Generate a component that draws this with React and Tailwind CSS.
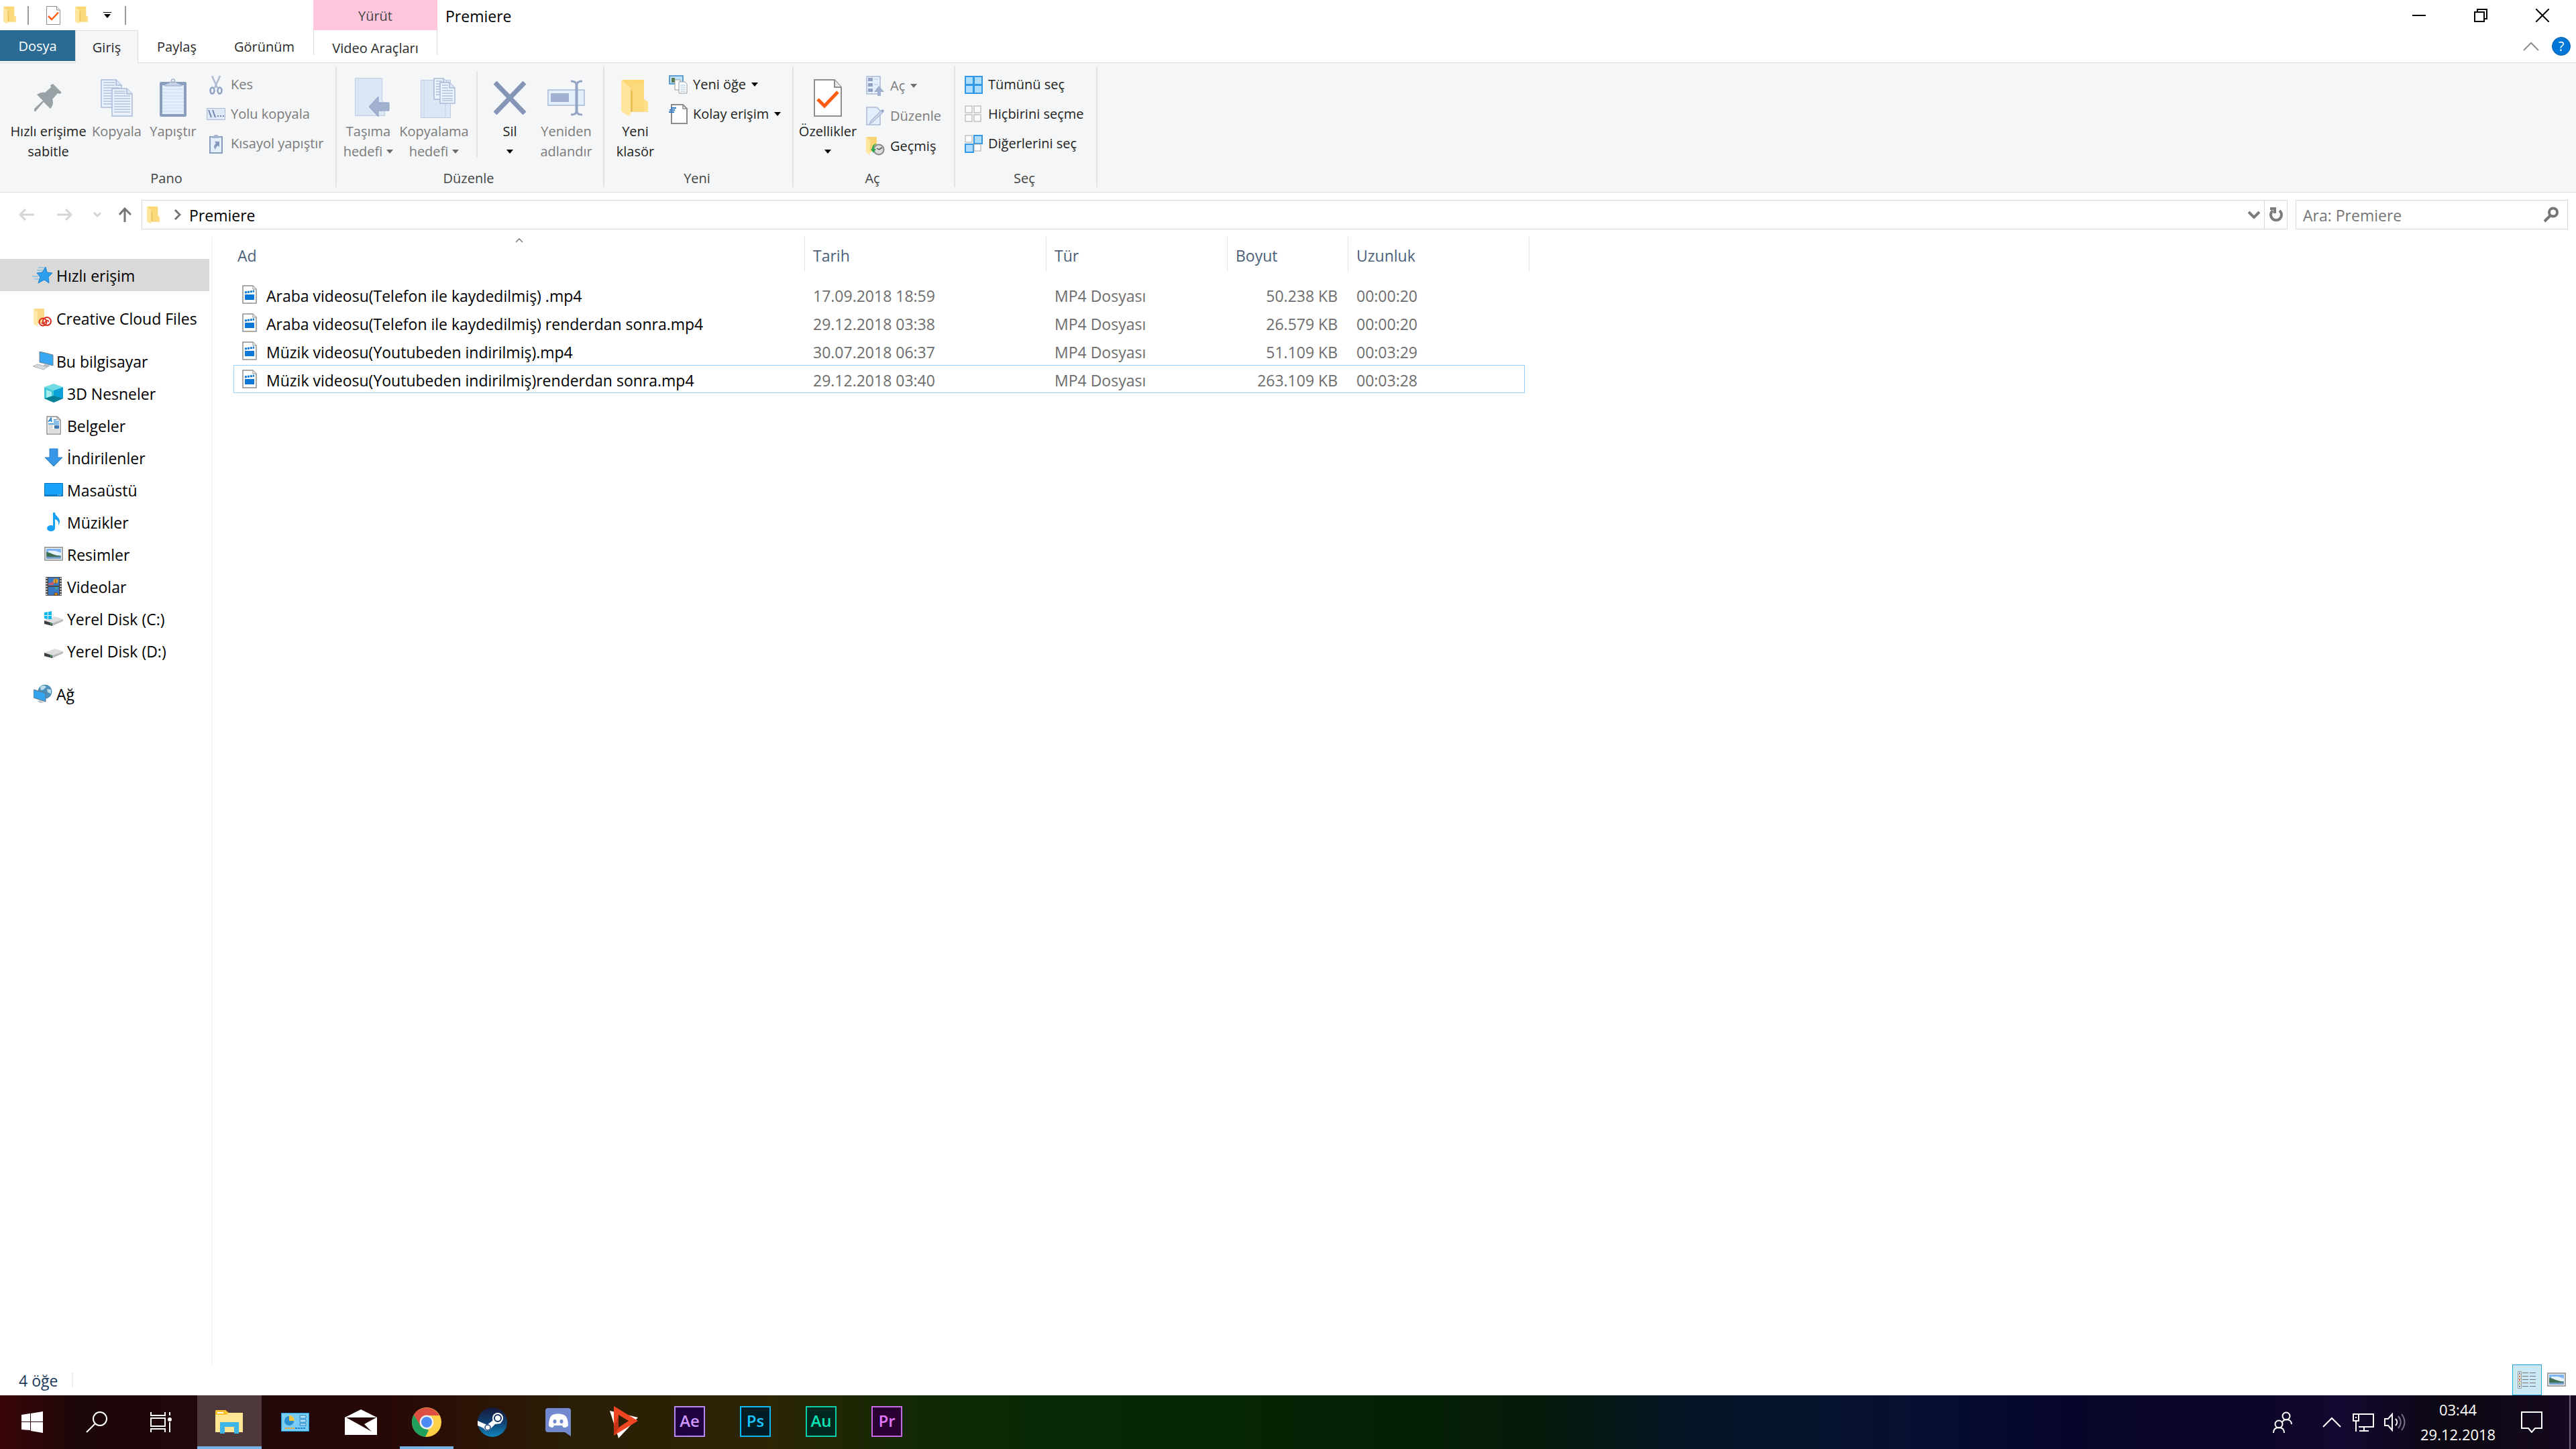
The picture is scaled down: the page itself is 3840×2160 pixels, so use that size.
import { useState } from "react";

const files = [
  { name: "Araba videosu(Telefon ile kaydedilmiş) .mp4", date: "17.09.2018 18:59", size: "50.238 KB", length: "00:00:20" },
  { name: "Araba videosu(Telefon ile kaydedilmiş) renderdan sonra.mp4", date: "29.12.2018 03:38", size: "26.579 KB", length: "00:00:20" },
  { name: "Müzik videosu(Youtubeden indirilmiş).mp4", date: "30.07.2018 06:37", size: "51.109 KB", length: "00:03:29" },
  { name: "Müzik videosu(Youtubeden indirilmiş)renderdan sonra.mp4", date: "29.12.2018 03:40", size: "263.109 KB", length: "00:03:28" },
];

/* ---------- shared icons ---------- */

function Folder({ className }) {
  return (
    <svg className={className} viewBox="0 0 42 54">
      <path d="M2 0h32v29l6 4v15H14z" fill="#fbd672" />
      <path d="M14 6h20v42H14z" fill="#fada7c" />
      <path d="M34 29l6 4v15h-6z" fill="#ffe08a" />
      <path d="M0 0l14 12v40l-3 2L0 47z" fill="#ffe69c" />
      <path d="M14 14v34l3-1V17z" fill="#e9be57" />
    </svg>
  );
}

function CheckDoc({ className }) {
  return (
    <svg className={className} viewBox="0 0 42 56">
      <path d="M1 1h30l10 11v43H1z" fill="#fff" stroke="#8f8f8f" strokeWidth="2" />
      <path d="M31 1v11h10" fill="#e9e9e9" stroke="#8f8f8f" strokeWidth="2" />
      <path d="M6 30l10 10 20-21" fill="none" stroke="#fb5d13" strokeWidth="5" />
    </svg>
  );
}

function Caret({ className }) {
  return (
    <svg className={className} width="10" height="6" viewBox="0 0 10 6">
      <path d="M0 0h10L5 6z" fill="currentColor" />
    </svg>
  );
}

function Picture() {
  return (
    <svg width="28" height="22" viewBox="0 0 28 22">
      <path d="M1 1h26v19H1z" fill="#fff" stroke="#a2a2a2" strokeWidth="2" />
      <path d="M3 3h22v15H3z" fill="#7db4f5" />
      <path d="M6 6h10l9 3v4H6z" fill="#e6f2fb" />
      <path d="M3 8c6 0 8 4 22 6v1H3z" fill="#3f6f55" />
      <path d="M3 15h22v3H3z" fill="#6f9cc8" />
    </svg>
  );
}

/* ---------- ribbon icons ---------- */

function Pin() {
  return (
    <svg width="42" height="42" viewBox="0 0 42 42" fill="#97a1a6">
      <path d="M28 0l13 13-3 2-3-1-8 9c2 5 1 9-3 14L14 27 2 41H0v-4l13-12L4 16c4-3 8-4 12-3l9-8-1-3z" />
    </svg>
  );
}

function Sheet({ x, y, w, h, lines }) {
  return (
    <g transform={`translate(${x} ${y})`}>
      <path d={`M1 1h${w - 10}l8 8v${h - 9}H1z`} fill="#e9f2fd" stroke="#a9b9d6" strokeWidth="1.5" />
      <path d={`M${w - 9} 1v8h8`} fill="#dbe7f7" stroke="#a9b9d6" strokeWidth="1.5" />
      {lines.map((ly) => (
        <path key={ly} d={`M4 ${ly}h${ly < 10 ? w - 15 : w - 8}`} stroke="#a9b9d6" strokeWidth="1.3" />
      ))}
    </g>
  );
}

function CopyIcon() {
  return (
    <svg width="48" height="56" viewBox="0 0 48 56">
      <Sheet x={0} y={0} w={32} h={42} lines={[5, 9, 13, 17, 21, 25, 29, 33, 37]} />
      <Sheet x={16} y={13} w={32} h={42} lines={[5, 8, 12, 16, 20, 24, 28, 32, 36]} />
    </svg>
  );
}

function PasteIcon() {
  return (
    <svg width="40" height="58" viewBox="0 0 40 58">
      <rect y="5" width="40" height="52" rx="2" fill="#8a9dbd" />
      <path d="M4 10h32v43H4z" fill="#e4effc" />
      <path d="M4 16h32M4 21h32M4 26h32M4 30h32M4 35h32M4 40h32M4 44h32M4 49h32" stroke="#c9d8ee" />
      <path d="M7 11c1-4 6-2 9-6h8c3 4 8 2 9 6z" fill="#c6d2e6" stroke="#93a6c6" />
      <circle cx="20" cy="3.500" r="2.500" fill="none" stroke="#a4b5d1" strokeWidth="1.500" />
    </svg>
  );
}

function CutIcon() {
  return (
    <svg width="20" height="29" viewBox="0 0 20 29" fill="none">
      <path d="M4 1l8 18M16 1L8 19" stroke="#aebcd2" strokeWidth="2.500" />
      <ellipse cx="4.500" cy="23" rx="3" ry="4.500" stroke="#8fa2c6" strokeWidth="2.500" />
      <ellipse cx="15.500" cy="23" rx="3" ry="4.500" stroke="#8fa2c6" strokeWidth="2.500" />
    </svg>
  );
}

function PathIcon() {
  return (
    <svg width="28" height="18" viewBox="0 0 28 18">
      <path d="M.5.5h27v17H.5z" fill="#dfe9f6" stroke="#a9b9d6" />
      <path d="M3 3l4 11M9 3l4 11" stroke="#7186b0" strokeWidth="2" />
      <path d="M16 12h2M20 12h2M24 12h2" stroke="#7186b0" strokeWidth="2" />
    </svg>
  );
}

function ShortcutIcon() {
  return (
    <svg width="20" height="29" viewBox="0 0 20 29">
      <path d="M1 4h18v24H1z" fill="#e4effc" stroke="#8a9dbd" strokeWidth="2" />
      <path d="M5 4l3-3h4l3 3v2H5z" fill="#a4b5d1" />
      <path d="M8 11h7v8l-2-2c-3 2-3 3-4 6-3-4-2-7 1-9z" fill="#8599bf" />
    </svg>
  );
}

function MoveIcon() {
  return (
    <svg width="64" height="60" viewBox="-12 0 64 60">
      <path d="M.5.5h40v33l4 5v18H.5z" fill="#dbe7f5" stroke="#bccbe2" />
      <path d="M5 1v55" stroke="#cbd9ec" />
      <path d="M21 43l14-15v9h16v12H35v9z" fill="#a1b1cf" stroke="#8fa1c4" />
    </svg>
  );
}

function CopyToIcon() {
  return (
    <svg width="64" height="60" viewBox="-12 0 64 60">
      <path d="M.5 3.500h44v56H.5z" fill="#dbe7f5" stroke="#bccbe2" />
      <path d="M5 4v55M37 38v21" stroke="#c2d1e7" />
      <Sheet x={19} y={0} w={24} h={32} lines={[5, 9, 13, 17, 21, 25]} />
      <Sheet x={28} y={6} w={24} h={32} lines={[5, 9, 13, 17, 21, 25, 28]} />
    </svg>
  );
}

function DeleteIcon() {
  return (
    <svg width="50" height="50" viewBox="0 0 50 50">
      <path d="M3 2l44 46M47 2L3 48" stroke="#8495b5" strokeWidth="7" />
    </svg>
  );
}

function RenameIcon() {
  return (
    <svg width="56" height="54" viewBox="0 0 56 54">
      <path d="M1 15h54v23H1z" fill="#e4effc" stroke="#a9b9d6" strokeWidth="1.500" />
      <path d="M5 20h27v13H5z" fill="#a1b1cf" />
      <path d="M35 2c5 0 8 1 8 5v40c0 4-3 5-8 5M52 2c-5 0-8 1-8 5v40c0 4 3 5 8 5" fill="none" stroke="#93a4c4" strokeWidth="3" />
    </svg>
  );
}

function NewItemIcon() {
  return (
    <svg width="28" height="28" viewBox="0 0 28 28">
      <path d="M1 1h20v12H1z" fill="#bfe1f7" stroke="#3a86c8" strokeWidth="1.500" />
      <path d="M4 4h5v7H4z" fill="#5b7a4e" />
      <path d="M9 7h8v15H9z" fill="#fff" stroke="#999" />
      <path d="M15 10h9l3 3v14H15z" fill="#fff" stroke="#999" />
      <path d="M17 15h8M17 18h8M17 21h8M17 24h8" stroke="#9fc0dc" />
    </svg>
  );
}

function EasyAccessIcon() {
  return (
    <svg width="28" height="30" viewBox="0 0 28 30">
      <path d="M4 1h17l6 6v22H4z" fill="#fff" stroke="#8c8c8c" strokeWidth="2" />
      <path d="M21 1v6h6" fill="none" stroke="#8c8c8c" strokeWidth="1.500" />
      <path d="M3 6h8M1 9h8M0 12h8" stroke="#2f79c4" strokeWidth="2" />
    </svg>
  );
}

function OpenIcon() {
  return (
    <svg width="28" height="30" viewBox="0 0 28 30">
      <path d="M1 1h20v26H1z" fill="#e4effc" stroke="#a9b9d6" strokeWidth="1.500" />
      <path d="M3 3h7v5H3zM3 11h7v5H3zM3 19h7v5H3z" fill="#8fa1c4" />
      <path d="M12 5h6M12 13h6" stroke="#b4c4de" />
      <path d="M12 24l7-9 8 9h-5v6h-5v-6z" fill="#9fb0d0" />
    </svg>
  );
}

function EditIcon() {
  return (
    <svg width="28" height="28" viewBox="0 0 28 28">
      <path d="M1 1h15l5 5v21H1z" fill="#e4effc" stroke="#a9b9d6" strokeWidth="1.500" />
      <path d="M5 26l2-5L23 5l3 3-16 15z" fill="#c6d2e6" stroke="#9fb0d0" />
      <path d="M22 6l3-2 2 2-2 3z" fill="#93a6c6" />
    </svg>
  );
}

function HistoryIcon() {
  return (
    <svg width="28" height="28" viewBox="0 0 28 28">
      <path d="M1 0h15v22H6z" fill="#f9d574" />
      <path d="M0 0l6 5v22l-6-4z" fill="#ffe69c" />
      <circle cx="19" cy="19" r="7.500" fill="#dcdcdc" stroke="#8b8b8b" strokeWidth="2" />
      <path d="M19 19l-3-2M19 19l5-3" stroke="#555" strokeWidth="1.500" />
      <path d="M16 10c-4 2-5 5-4 8h3l-4 6-4-6h2c0-5 3-8 7-8z" fill="#2aa64f" />
    </svg>
  );
}

function SelectIcon({ on }) {
  const cells = [[1, 1], [14, 1], [1, 14], [14, 14]];
  return (
    <svg width="27" height="27" viewBox="0 0 27 27">
      {cells.map(([x, y], i) => (
        <rect
          key={i}
          x={x}
          y={y}
          width={on[i] ? 12 : 10}
          height={on[i] ? 12 : 10}
          fill={on[i] ? "#aedcfd" : "#fbfbfb"}
          stroke={on[i] ? "#3399e6" : "#a8a8a8"}
          strokeWidth={on[i] ? 2 : 1}
        />
      ))}
    </svg>
  );
}

/* ---------- sidebar icons ---------- */

function Star() {
  return (
    <svg width="32" height="26" viewBox="0 0 32 26">
      <path d="M20 1l2 8 8 1-6 6 1 9-7-5-9 5 3-9-5-6 8-1z" fill="#2c9fee" stroke="#1b7fcb" />
      <path d="M9 2h10M7 6h9M0 15h9M3 19h7" stroke="#5fb4ee" />
    </svg>
  );
}

function CreativeCloud() {
  return (
    <svg width="28" height="28" viewBox="0 0 28 28">
      <path d="M1 0h15v22H6z" fill="#f9d987" />
      <path d="M0 0l6 5v22l-6-4z" fill="#ffe8a8" />
      <circle cx="20" cy="19" r="6" fill="#fff" stroke="#dd2c1e" strokeWidth="2" />
      <circle cx="14" cy="20" r="5.500" fill="none" stroke="#dd2c1e" strokeWidth="2" />
      <path d="M12 21c2 3 4 1 6-2s5-1 4 1" fill="none" stroke="#dd2c1e" strokeWidth="1.500" />
    </svg>
  );
}

function Computer() {
  return (
    <svg width="32" height="28" viewBox="0 0 32 28">
      <path d="M11 0l20 5v16l-20-5z" fill="#36a7f0" stroke="#6d7f8c" />
      <path d="M19 19l8 2-3 2-9-1z" fill="#b6bdc2" />
      <path d="M8 19l15 4-6 4L1 22z" fill="#d6dadd" stroke="#adb3b7" />
    </svg>
  );
}

function Cube() {
  return (
    <svg width="28" height="28" viewBox="0 0 28 28">
      <path d="M14 0l14 5-14 5L0 5z" fill="#6fdbe4" />
      <path d="M0 5l14 5v18L0 22z" fill="#3fc6d6" />
      <path d="M28 5l-14 5v18l14-6z" fill="#0aa0d8" />
      <path d="M0 22l14-4 14 4-14 6z" fill="#067f96" />
      <path d="M3 9l8 3v6l-8 3z" fill="#a5ecf0" />
    </svg>
  );
}

function Documents() {
  return (
    <svg width="22" height="28" viewBox="0 0 22 28">
      <path d="M1 1h15l5 5v21H1z" fill="#fff" stroke="#8c8c8c" strokeWidth="1.500" />
      <path d="M16 1v5h5" fill="none" stroke="#8c8c8c" />
      <path d="M3 9l4-6 1 6M5 7h3M11 6h4M11 9h8M3 12h16" fill="none" stroke="#1f83d2" strokeWidth="1.500" />
      <path d="M12 14h7v5h-7z" fill="#3d78ad" />
      <path d="M3 15h7M3 18h7M3 21h16M3 24h16" stroke="#9a9a9a" />
    </svg>
  );
}

function Downloads() {
  return (
    <svg width="28" height="28" viewBox="0 0 28 28">
      <path d="M8 1h12v13h7L14 27 1 14h7z" fill="#3797e6" stroke="#2b7fc9" />
    </svg>
  );
}

function Desktop() {
  return (
    <svg width="28" height="20" viewBox="0 0 28 20">
      <path d="M.5.5h27v19H.5z" fill="#18a3fb" stroke="#0b72b9" />
      <path d="M1 18h26" stroke="#0a5f9e" />
      <path d="M20 18h6" stroke="#fff" strokeDasharray="1 1" />
    </svg>
  );
}

function Music() {
  return (
    <svg width="20" height="28" viewBox="0 0 20 28" fill="#18a0f5">
      <path d="M9 0h3c0 5 7 7 7 13 0 3-1 5-2 6 1-6-2-8-5-9v13H9z" />
      <ellipse cx="6" cy="23.500" rx="6" ry="4.500" />
    </svg>
  );
}

function Videos() {
  return (
    <svg width="24" height="28" viewBox="0 0 24 28">
      <path d="M0 0h24v28H0z" fill="#4a4a4a" />
      <path d="M1.500 1v26M22.500 1v26" stroke="#e8e8e8" strokeWidth="2" strokeDasharray="2 2" />
      <path d="M4 1h16v12H4zM4 15h16v12H4z" fill="#3a78c4" />
      <path d="M4 10l8-3v5H4z" fill="#cf5a68" />
      <circle cx="15" cy="6" r="3.500" fill="#e8a72c" />
      <path d="M15 3v7M13 25a3 3 0 015 0v2h-5z" fill="#e8a72c" stroke="#6b3d16" />
      <path d="M13 15h6l-3 4z" fill="#3ca99d" />
    </svg>
  );
}

function Disk({ system }) {
  return (
    <svg width="28" height="22" viewBox="0 0 28 22">
      <path d="M0 14l16-6 12 4-16 6z" fill="#dcdddf" />
      <path d="M0 14l12 4v4L0 19z" fill="#3c4043" />
      <path d="M12 18l16-6v3l-16 7z" fill="#b7b9bc" />
      <path d="M9 19h2" stroke="#3fbf5a" strokeWidth="2" />
      {system && <path d="M0 2l5-1v5H0zM6 1l5-1v6H6zM0 7h5v5l-5-1zM6 7h5v5H6z" fill="#12b6ee" />}
    </svg>
  );
}

function Network() {
  return (
    <svg width="28" height="28" viewBox="0 0 28 28">
      <circle cx="17" cy="11" r="10.500" fill="#4b8fb8" />
      <path d="M10 4c4-3 7-2 9 0l-4 4-4 1zM20 7l6 1v6l-5-2z" fill="#bcdcea" />
      <path d="M0 8l18 5v13L0 20z" fill="#35a4ef" stroke="#5f7582" />
      <path d="M5 25l5-1 6 3-6 1z" fill="#c2c7cb" />
    </svg>
  );
}

function VideoFile() {
  return (
    <svg width="22" height="28" viewBox="0 0 22 28">
      <path d="M1 1h15l5 5v21H1z" fill="#fff" stroke="#8f8f8f" strokeWidth="1.500" />
      <path d="M16 1v5h5" fill="#eee" stroke="#8f8f8f" />
      <path d="M4 14h14v8H4z" fill="#0b78d7" />
      <path d="M4 11l14-2" stroke="#0b78d7" strokeWidth="3" strokeDasharray="3 1" />
    </svg>
  );
}

/* ---------- ribbon pieces ---------- */

function BigButton({ icon, lines, width, disabled, caret }) {
  return (
    <button className={`${width} flex flex-col items-center whitespace-nowrap pt-[17px] leading-[30px] ${disabled ? "text-[#7b7b7b]" : "text-[#1e1e1e]"}`}>
      <span className="flex h-[70px] items-center justify-center">{icon}</span>
      <span>{lines[0]}</span>
      <span className="flex h-[30px] items-center gap-[6px]">
        {lines[1]}
        {caret && <Caret className={disabled ? "text-[#6d6d6d]" : "text-black"} />}
      </span>
    </button>
  );
}

function SmallButton({ icon, label, disabled, caret }) {
  return (
    <button className={`flex h-11 items-center gap-2 whitespace-nowrap ${disabled ? "text-[#7b7b7b]" : "text-[#1e1e1e]"}`}>
      <span className="flex w-7 justify-center">{icon}</span>
      <span>{label}</span>
      {caret && <Caret className={disabled ? "text-[#6d6d6d]" : "text-black"} />}
    </button>
  );
}

function Group({ label, width, children }) {
  return (
    <>
      <section className={`${width} flex shrink-0 flex-col`}>
        <div className="flex h-[157px]">{children}</div>
        <div className="pr-1 text-center leading-[30px] text-[#444]">{label}</div>
      </section>
      <div className="mt-[5px] h-[180px] w-[2px] shrink-0 bg-[#e2e3e5]" />
    </>
  );
}

function Ribbon() {
  return (
    <div className="flex h-[194px] border-y border-[#dadbdc] bg-[#f5f6f7] text-[20px]">
      <Group label="Pano" width="w-[500px]">
        <div className="flex pl-3">
          <BigButton icon={<Pin />} lines={["Hızlı erişime", "sabitle"]} width="w-[120px]" />
          <BigButton icon={<CopyIcon />} lines={["Kopyala"]} width="w-[84px]" disabled />
          <BigButton icon={<PasteIcon />} lines={["Yapıştır"]} width="w-[84px]" disabled />
        </div>
        <div className="flex flex-col pt-[10px] pl-2">
          <SmallButton icon={<CutIcon />} label="Kes" disabled />
          <SmallButton icon={<PathIcon />} label="Yolu kopyala" disabled />
          <SmallButton icon={<ShortcutIcon />} label="Kısayol yapıştır" disabled />
        </div>
      </Group>
      <Group label="Düzenle" width="w-[397px]">
        <BigButton icon={<MoveIcon />} lines={["Taşıma", "hedefi"]} width="w-[94px]" disabled caret />
        <BigButton icon={<CopyToIcon />} lines={["Kopyalama", "hedefi"]} width="w-[102px]" disabled caret />
        <div className="ml-3 mt-[13px] mr-1 h-[128px] w-[2px] bg-[#e2e3e5]" />
        <BigButton icon={<DeleteIcon />} lines={["Sil"]} width="w-[88px]" caret />
        <BigButton icon={<RenameIcon />} lines={["Yeniden", "adlandır"]} width="w-[80px]" disabled />
      </Group>
      <Group label="Yeni" width="w-[280px]">
        <div className="flex pl-[6px]">
          <BigButton icon={<Folder className="h-[54px] w-[42px]" />} lines={["Yeni", "klasör"]} width="w-[80px]" />
        </div>
        <div className="flex flex-col pt-[10px] pl-[10px]">
          <SmallButton icon={<NewItemIcon />} label="Yeni öğe" caret />
          <SmallButton icon={<EasyAccessIcon />} label="Kolay erişim" caret />
        </div>
      </Group>
      <Group label="Aç" width="w-[239px]">
        <div className="flex pl-1">
          <BigButton icon={<CheckDoc className="h-[56px] w-[42px]" />} lines={["Özellikler"]} width="w-[94px]" caret />
        </div>
        <div className="flex flex-col gap-px pt-3 pl-[10px]">
          <SmallButton icon={<OpenIcon />} label="Aç" disabled caret />
          <SmallButton icon={<EditIcon />} label="Düzenle" disabled />
          <SmallButton icon={<HistoryIcon />} label="Geçmiş" />
        </div>
      </Group>
      <Group label="Seç" width="w-[210px]">
        <div className="flex flex-col pt-[10px] pl-[13px]">
          <SmallButton icon={<SelectIcon on={[1, 1, 1, 1]} />} label="Tümünü seç" />
          <SmallButton icon={<SelectIcon on={[0, 0, 0, 0]} />} label="Hiçbirini seçme" />
          <SmallButton icon={<SelectIcon on={[0, 1, 1, 0]} />} label="Diğerlerini seç" />
        </div>
      </Group>
    </div>
  );
}

/* ---------- window chrome ---------- */

function TitleBar() {
  return (
    <div className="flex h-[45px] items-stretch">
      <div className="flex w-[467px] items-center pl-[5px]">
        <Folder className="h-[27px] w-[20px]" />
        <div className="ml-4 h-7 w-[2px] bg-[#9a9a9a]" />
        <button aria-label="Özellikler" className="ml-[26px]"><CheckDoc className="h-7 w-[21px]" /></button>
        <button aria-label="Yeni klasör" className="ml-[22px]"><Folder className="h-[27px] w-[20px]" /></button>
        <button aria-label="Özelleştir" className="ml-[22px]">
          <svg width="12" height="10" viewBox="0 0 12 10">
            <path d="M0 0h12v1H0zM1 3h10L6 9z" />
          </svg>
        </button>
        <div className="ml-5 h-7 w-[2px] bg-[#9a9a9a]" />
      </div>
      <div className="flex w-[185px] items-center justify-center bg-[#ffc6de] pt-[2px] text-[20px] text-[#444]">Yürüt</div>
      <h1 className="flex flex-1 items-center pt-[2px] pl-3">Premiere</h1>
      <div className="flex pr-1">
        <button aria-label="Simge durumuna küçült" className="flex w-[92px] items-center justify-center">
          <svg width="20" height="20" viewBox="0 0 20 20"><path d="M0 9h20v2H0z" /></svg>
        </button>
        <button aria-label="Geri yükle" className="flex w-[92px] items-center justify-center">
          <svg width="20" height="20" viewBox="0 0 20 20" fill="none" stroke="#000" strokeWidth="2"><path d="M1 5h14v14H1zM5 5V1h14v14h-4" /></svg>
        </button>
        <button aria-label="Kapat" className="flex w-[92px] items-center justify-center">
          <svg width="20" height="20" viewBox="0 0 20 20" stroke="#000" strokeWidth="2"><path d="M0 0l20 20M20 0L0 20" /></svg>
        </button>
      </div>
    </div>
  );
}

function RibbonTabs() {
  return (
    <div className="flex h-12 text-[20px] text-[#2b2b2b]">
      <button className="h-[46px] w-[112px] bg-[#2b6a92] pt-[2px] text-white">Dosya</button>
      {/* active tab covers the ribbon's top border */}
      <button className="relative z-10 -mb-px w-[94px] border-x border-t border-[#dadbdc] bg-[#f5f6f7] pt-[2px]">Giriş</button>
      <button className="w-[115px] pt-[2px]">Paylaş</button>
      <button className="w-[146px] pt-[2px]">Görünüm</button>
      <button className="h-[37px] w-[185px] border-x border-[#dadbdc] pt-3">Video Araçları</button>
      <div className="flex flex-1 items-center justify-end gap-[19px] pr-2">
        <button aria-label="Şeridi simge durumuna küçült">
          <svg width="24" height="14" viewBox="0 0 24 14" fill="none" stroke="#8e8e8e" strokeWidth="2"><path d="M1 13L12 2l11 11" /></svg>
        </button>
        <button className="flex size-7 items-center justify-center rounded-full border border-[#0a5da8] bg-[#0178d7] text-[20px] leading-none text-white">?</button>
      </div>
    </div>
  );
}

function AddressBar() {
  const [query, setQuery] = useState("");

  return (
    <div className="flex items-center py-[11px] pr-3">
      <div className="flex w-[211px] items-center pl-7">
        <button aria-label="Geri" className="w-[57px]">
          <svg width="23" height="18" viewBox="0 0 23 18" fill="none" stroke="#d5d5d5" strokeWidth="3"><path d="M23 9H2M10 1L2 9l8 8" /></svg>
        </button>
        <button aria-label="İleri" className="w-[54px]">
          <svg width="23" height="18" viewBox="0 0 23 18" fill="none" stroke="#d5d5d5" strokeWidth="3"><path d="M0 9h21M13 1l8 8-8 8" /></svg>
        </button>
        <button aria-label="Son konumlar" className="w-[38px]">
          <svg width="12" height="8" viewBox="0 0 12 8" fill="none" stroke="#d5d5d5" strokeWidth="3"><path d="M1 1l5 5 5-5" /></svg>
        </button>
        <button aria-label="Yukarı">
          <svg width="19" height="22" viewBox="0 0 19 22" fill="none" stroke="#757575" strokeWidth="3"><path d="M9 22V2M1 11l8-9 9 9" /></svg>
        </button>
      </div>
      <div className="flex h-11 flex-1 items-center border border-[#d9d9d9] pl-[7px]">
        <Folder className="h-[27px] w-[20px]" />
        <svg className="ml-5" width="11" height="16" viewBox="0 0 11 16" fill="none" stroke="#757575" strokeWidth="3"><path d="M2 1l7 7-7 7" /></svg>
        <button className="ml-3 pt-[2px]">Premiere</button>
        <button aria-label="Önceki konumlar" className="mr-[6px] ml-auto">
          <svg width="18" height="12" viewBox="0 0 18 12" fill="none" stroke="#7c7c7c" strokeWidth="4"><path d="M1 2l8 8 8-8" /></svg>
        </button>
        <button aria-label="Yenile" className="flex h-full w-[34px] items-center justify-center border-l border-[#d9d9d9]">
          <svg width="20" height="22" viewBox="0 0 20 22" fill="none" stroke="#7c7c7c" strokeWidth="4"><path d="M15 5a8 8 0 11-10 0M1 2h7v7" /></svg>
        </button>
      </div>
      <label className="ml-3 flex h-11 w-[406px] items-center border border-[#d9d9d9] pr-3 pl-[10px]">
        <input
          type="search"
          aria-label="Ara"
          placeholder="Ara: Premiere"
          className="min-w-0 flex-1 pt-[2px] outline-none placeholder:text-[#767676]"
          value={query}
          onChange={(e) => setQuery(e.target.value)}
        />
        <svg width="24" height="24" viewBox="0 0 24 24" fill="none" stroke="#757575" strokeWidth="4"><circle cx="15" cy="8.500" r="6" /><path d="M11 13L2 22" /></svg>
      </label>
    </div>
  );
}

/* ---------- content ---------- */

function NavItem({ icon, label, nested, active }) {
  return (
    <li>
      <a href="#" className={`flex h-12 w-[312px] items-center gap-1 ${nested ? "pl-16" : "pl-12"} ${active ? "bg-[#d9d9d9]" : ""}`}>
        <span className="flex w-8 justify-center">{icon}</span>
        <span className="pt-[2px]">{label}</span>
      </a>
    </li>
  );
}

function Sidebar() {
  return (
    <nav className="flex w-[317px] shrink-0 flex-col gap-4 border-r-2 border-[#f5f5f5] pt-[33px]">
      <ul><NavItem icon={<Star />} label="Hızlı erişim" active /></ul>
      <ul><NavItem icon={<CreativeCloud />} label="Creative Cloud Files" /></ul>
      <ul>
        <NavItem icon={<Computer />} label="Bu bilgisayar" />
        <NavItem icon={<Cube />} label="3D Nesneler" nested />
        <NavItem icon={<Documents />} label="Belgeler" nested />
        <NavItem icon={<Downloads />} label="İndirilenler" nested />
        <NavItem icon={<Desktop />} label="Masaüstü" nested />
        <NavItem icon={<Music />} label="Müzikler" nested />
        <NavItem icon={<Picture />} label="Resimler" nested />
        <NavItem icon={<Videos />} label="Videolar" nested />
        <NavItem icon={<Disk system />} label="Yerel Disk (C:)" nested />
        <NavItem icon={<Disk />} label="Yerel Disk (D:)" nested />
      </ul>
      <ul><NavItem icon={<Network />} label="Ağ" /></ul>
    </nav>
  );
}

function HeadCell({ label, sorted, span }) {
  return (
    <th colSpan={span} className="relative p-0 pb-[13px] text-left font-normal">
      {sorted && (
        <svg className="absolute inset-x-0 top-[2px] mx-auto" width="12" height="7" viewBox="0 0 12 7" fill="none" stroke="#777" strokeWidth="1.500"><path d="M1 6l5-5 5 5" /></svg>
      )}
      <button className={`h-[52px] w-full border-r border-[#e5e5e5] pt-1 text-left ${sorted ? "pl-[6px]" : "pl-3"}`}>{label}</button>
    </th>
  );
}

function FileTable() {
  return (
    <table className="ml-[31px] w-[1932px] table-fixed border-separate border-spacing-0 self-start">
      <colgroup>
        <col className="w-[852px]" />
        <col className="w-[360px]" />
        <col className="w-[270px]" />
        <col className="w-[180px]" />
        <col className="w-[263px]" />
        <col className="w-[7px]" />
      </colgroup>
      <thead className="text-[#4c607a]">
        <tr>
          <HeadCell label="Ad" sorted />
          <HeadCell label="Tarih" />
          <HeadCell label="Tür" />
          <HeadCell label="Boyut" />
          <HeadCell label="Uzunluk" span={2} />
        </tr>
      </thead>
      <tbody className="text-[#6d6d6d]">
        {files.map((file, i) => {
          const line = i === 3 ? "border-[#99d1ff]" : "border-transparent";
          return (
            <tr key={file.name} className="h-[42px]">
              <td className={`border-y border-l p-0 ${line}`}>
                <span className="flex items-center gap-[14px] pl-3 text-black">
                  <VideoFile />
                  <span className="pt-1">{file.name}</span>
                </span>
              </td>
              <td className={`border-y p-0 pt-1 pl-3 ${line}`}>{file.date}</td>
              <td className={`border-y p-0 pt-1 pl-3 ${line}`}>MP4 Dosyası</td>
              <td className={`border-y p-0 pt-1 pr-4 text-right ${line}`}>{file.size}</td>
              <td className={`border-y border-r p-0 pt-1 pl-3 ${line}`}>{file.length}</td>
            </tr>
          );
        })}
      </tbody>
    </table>
  );
}

function StatusBar() {
  return (
    <div className="flex h-[46px] items-center pr-[15px] pl-7 text-[#1e395b]">
      <span className="pt-[2px]">4 öğe</span>
      <div className="ml-[21px] h-[22px] w-[2px] bg-[#ededed]" />
      <button aria-label="Ayrıntılar" className="ml-auto flex h-[46px] w-11 items-center justify-center border border-[#26a0da] bg-[#cbe8f6]">
        <svg width="28" height="26" viewBox="0 0 28 26">
          {[0, 5, 10, 15, 20].map((y, i) => (
            <g key={y}>
              <path d={`M.5 ${y + 0.5}h5v5h-5z`} fill="#fff" stroke="#999" />
              <path d={`M2 ${y + 2}h2v2H2z`} fill={["#4472c4", "#d07a2d", "#d03a2d", "#7fb23d", "#4472c4"][i]} />
              <path d={`M7 ${y + 2.5}h9M18 ${y + 2.5}h9`} stroke="#777" />
            </g>
          ))}
        </svg>
      </button>
      <button aria-label="Büyük simgeler" className="ml-2"><Picture /></button>
    </div>
  );
}

/* ---------- taskbar ---------- */

function ExplorerIcon() {
  return (
    <svg width="42" height="36" viewBox="0 0 42 36">
      <path d="M0 2l1-2h14l4 4h22v29H0z" fill="#ffe594" />
      <path d="M0 1l1-1h14l5 4-3 3H0z" fill="#f9c32f" />
      <path d="M3 3h9v2H3z" fill="#fff" />
      <path d="M7 18h28v17h-7V25H14v10H7z" fill="#3fb4e6" />
    </svg>
  );
}

function ControlPanelIcon() {
  return (
    <svg width="42" height="28" viewBox="0 0 42 28">
      <path d="M.5.5h41v27H.5z" fill="#79cdf5" stroke="#1b95d6" />
      <circle cx="12" cy="12" r="7" fill="#2c8fd0" />
      <path d="M12 12V4a8 8 0 018 8z" fill="#f9c440" />
      <path d="M28 4h9v4h-9zM28 10h9v4h-9zM28 16h9v3h-9z" fill="#b9e5fb" stroke="#2180bd" />
      <path d="M6 23h14" stroke="#f2a52c" strokeWidth="2" strokeDasharray="3 1" />
      <path d="M21 23h15" stroke="#1b84c6" strokeWidth="2" strokeDasharray="3 1" />
    </svg>
  );
}

function ChromeIcon() {
  return (
    <svg width="46" height="46" viewBox="0 0 46 46">
      <circle cx="23" cy="23" r="22" fill="#fdd045" />
      <path d="M4 12a22 22 0 0138 1H23L13 28z" fill="#dd4f42" />
      <path d="M4 12l10 17 12 6-5 10A22 22 0 014 12z" fill="#1fa05c" />
      <circle cx="23" cy="23" r="10.500" fill="#f1f1f1" />
      <circle cx="23" cy="23" r="8" fill="#4f8bf5" />
    </svg>
  );
}

function SteamIcon() {
  return (
    <svg width="46" height="46" viewBox="0 0 46 46">
      <defs>
        <linearGradient id="steam" x2="0" y2="1">
          <stop offset="0" stopColor="#15183a" />
          <stop offset=".5" stopColor="#113f70" />
          <stop offset="1" stopColor="#1286bd" />
        </linearGradient>
      </defs>
      <circle cx="23" cy="23" r="22" fill="url(#steam)" />
      <path d="M1 21l14 6 8-6 3-8 12 4-3 8-8 1-6 6a6 6 0 01-11 0L1 28z" fill="#fff" />
      <circle cx="31" cy="17" r="8" fill="#fff" />
      <circle cx="31" cy="17" r="5" fill="#fff" stroke="#14305b" strokeWidth="2" />
      <circle cx="16" cy="31" r="4" fill="#fff" stroke="#14477a" strokeWidth="1.500" />
    </svg>
  );
}

function DiscordIcon() {
  return (
    <svg width="38" height="42" viewBox="0 0 38 42">
      <path d="M4 0h30a4 4 0 014 4v38l-9-6H4a4 4 0 01-4-4V4a4 4 0 014-4z" fill="#7289ce" />
      <path d="M11 10c5-2 11-2 16 0 5 1 7 9 7 16-2 3-5 3-7 3l-2-3H13l-2 3c-3 0-5-1-6-3 0-7 2-15 6-16z" fill="#fff" />
      <ellipse cx="14" cy="20" rx="2.500" ry="3" fill="#7289ce" />
      <ellipse cx="24" cy="20" rx="2.500" ry="3" fill="#7289ce" />
    </svg>
  );
}

function PlayIcon() {
  return (
    <svg width="42" height="48" viewBox="0 0 42 48">
      <path d="M0 7l42 10-29 31z" fill="#fff" />
      <path d="M6 0l36 22L6 44z" fill="#ee4623" />
      <path d="M6 44V30l8-16v18z" fill="#c43414" />
      <path d="M13 13l15 9-15 10z" fill="#2a1f04" />
    </svg>
  );
}

const taskButton = "flex h-20 w-24 shrink-0 items-center justify-center";

function AdobeTile({ text, tone }) {
  return (
    <button className={`${taskButton} pb-[3px]`}>
      <span className={`flex h-[46px] w-[46px] items-center justify-center border-2 pb-[2px] text-[24px] leading-none font-semibold ${tone}`}>{text}</span>
    </button>
  );
}

function Taskbar() {
  return (
    <footer className="flex h-20 items-stretch bg-[linear-gradient(90deg,#3a0508_0%,#1c0709_3%,#20070a_8%,#260707_15%,#2c1205_18%,#2a1e05_22%,#2b2504_30%,#102a05_36%,#052a04_42%,#052004_55%,#061a0c_60%,#041528_66%,#061030_74%,#06062a_80%,#0e0628_88%,#130830_91%,#0c0812_95%,#160820_100%)] text-white">
      <button aria-label="Başlat" className={taskButton}>
        <svg width="32" height="32" viewBox="0 0 32 32" fill="#fff"><path d="M0 5l13-2v12H0zM14 3l18-3v15H14zM0 16h13v12L0 27zM14 16h18v16l-18-3z" /></svg>
      </button>
      <button aria-label="Ara" className={taskButton}>
        <svg width="32" height="32" viewBox="0 0 32 32" fill="none" stroke="#fff" strokeWidth="2"><circle cx="21" cy="11" r="10" /><path d="M14 18L1 31" /></svg>
      </button>
      <button aria-label="Görev görünümü" className={taskButton}>
        <svg width="32" height="32" viewBox="0 0 32 32" fill="none" stroke="#fff" strokeWidth="2"><path d="M1 1v5h21V1M1 10h21v12H1zM1 31v-5h21v5M29 1v5M29 16v15" /><circle cx="29" cy="12" r="2" fill="#fff" /></svg>
      </button>
      <div className="flex gap-[2px] pl-[6px]">
        <button aria-label="Dosya Gezgini" className={`${taskButton} border-y-4 border-t-transparent border-b-[#76b3e2] bg-white/20 bg-clip-border`}><ExplorerIcon /></button>
        <button aria-label="Denetim Masası" className={taskButton}><ControlPanelIcon /></button>
        <button aria-label="Posta" className={taskButton}>
          <svg width="48" height="38" viewBox="0 0 48 38" fill="#fff"><path d="M0 12L24 0l24 12v26H0z" /><path d="M2 12h45L29 22l11 11z" fill="#260907" /></svg>
        </button>
        <button aria-label="Chrome" className={`${taskButton} relative`}>
          <ChromeIcon />
          <span className="absolute inset-x-2 bottom-0 h-1 bg-[#76b3e2]" />
        </button>
        <button aria-label="Steam" className={taskButton}><SteamIcon /></button>
        <button aria-label="Discord" className={taskButton}><DiscordIcon /></button>
        <button aria-label="Oynatıcı" className={taskButton}><PlayIcon /></button>
        <AdobeTile text="Ae" tone="border-[#b988ee] bg-[#1f0040] text-[#cf96fd]" />
        <AdobeTile text="Ps" tone="border-[#0cb8f5] bg-[#001d26] text-[#19c5fb]" />
        <AdobeTile text="Au" tone="border-[#0bcfa6] bg-[#002820] text-[#0ee3b5]" />
        <AdobeTile text="Pr" tone="border-[#c868e6] bg-[#2a0033] text-[#e279ff]" />
      </div>
      <div className="ml-auto flex items-center">
        <button aria-label="Kişiler">
          <svg width="30" height="32" viewBox="0 0 30 32" fill="none" stroke="#fff" strokeWidth="2"><circle cx="20" cy="7" r="5.500" /><circle cx="9" cy="19" r="5.500" /><path d="M1 32c0-5 3-8 8-8s8 3 8 8M14 16c2-3 4-4 6-4 5 0 8 3 8 7" /></svg>
        </button>
        <button aria-label="Gizli simgeler" className="ml-11">
          <svg width="28" height="16" viewBox="0 0 28 16" fill="none" stroke="#fff" strokeWidth="2"><path d="M1 15L14 2l13 13" /></svg>
        </button>
        <button aria-label="Ağ" className="ml-[17px]">
          <svg width="32" height="27" viewBox="0 0 32 27" fill="none" stroke="#fff" strokeWidth="2"><path d="M10 1h21v19H9M1 1h8v10H1zM5 11v16M4 6h2M17 20v5M10 26h14" /></svg>
        </button>
        <button aria-label="Ses" className="ml-[15px]">
          <svg width="34" height="28" viewBox="0 0 34 28" fill="none" stroke="#fff" strokeWidth="2"><path d="M1 9h5l6-7v24l-6-7H1zM17 9c3 3 3 7 0 10" /><path d="M21 5c5 6 5 12 0 18M26 2c6 8 6 16 0 24" stroke="#77738a" /></svg>
        </button>
        <button className="ml-5 w-[112px] text-center text-[22px] leading-[37px]">
          <span className="block">03:44</span>
          <span className="block">29.12.2018</span>
        </button>
        <button aria-label="Bildirimler" className="mr-10 ml-[38px]">
          <svg width="32" height="32" viewBox="0 0 32 32" fill="none" stroke="#fff" strokeWidth="2"><path d="M1 1h30v24H21l-5 6-5-6H1z" /></svg>
        </button>
        <div className="mr-2 h-full w-[2px] bg-[#6c6475]" />
      </div>
    </footer>
  );
}

function App() {
  return (
    <div className="flex min-h-screen flex-col bg-white font-['Open_Sans','Noto_Sans',sans-serif] text-[23px] leading-[30px] text-black">
      <header>
        <TitleBar />
        <RibbonTabs />
        <Ribbon />
        <AddressBar />
      </header>
      <main className="flex flex-1">
        <Sidebar />
        <FileTable />
      </main>
      <StatusBar />
      <Taskbar />
    </div>
  );
}

export default App;
